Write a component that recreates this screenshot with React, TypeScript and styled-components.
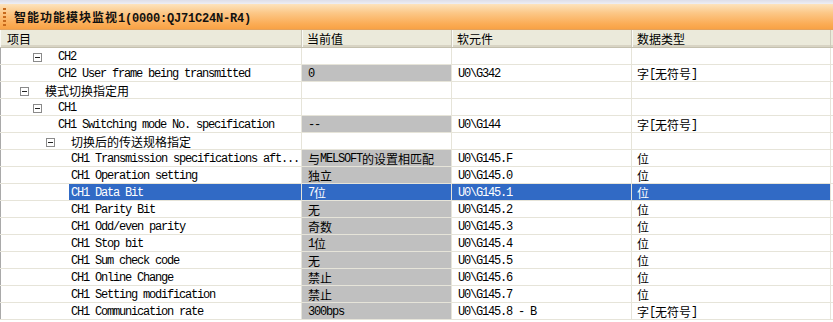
import React, { FC } from 'react';
import styled, { createGlobalStyle, css } from 'styled-components';

const GlobalStyle = createGlobalStyle`
  html, body {
    margin: 0;
    padding: 0;
    background: #fff;
  }
  body {
    font-family: "Noto Sans CJK SC", sans-serif;
    font-size: 12px;
    color: #000;
  }
`;

const COLUMNS = '302px 150px 180px 199px';
const LINE = '#e6e4d9';

type Item = {
  label: string;
  level: number;
  group?: boolean;
  value?: string;
  device?: string;
  type?: string;
  selected?: boolean;
};

const items: Item[] = [
  { label: 'CH2', level: 2, group: true },
  { label: 'CH2 User frame being transmitted', level: 2, value: '0', device: 'U0\\G342', type: '字[无符号]' },
  { label: '模式切换指定用', level: 1, group: true },
  { label: 'CH1', level: 2, group: true },
  { label: 'CH1 Switching mode No. specification', level: 2, value: '--', device: 'U0\\G144', type: '字[无符号]' },
  { label: '切换后的传送规格指定', level: 3, group: true },
  { label: 'CH1 Transmission specifications aft...', level: 3, value: '与MELSOFT的设置相匹配', device: 'U0\\G145.F', type: '位' },
  { label: 'CH1 Operation setting', level: 3, value: '独立', device: 'U0\\G145.0', type: '位' },
  { label: 'CH1 Data Bit', level: 3, value: '7位', device: 'U0\\G145.1', type: '位', selected: true },
  { label: 'CH1 Parity Bit', level: 3, value: '无', device: 'U0\\G145.2', type: '位' },
  { label: 'CH1 Odd/even parity', level: 3, value: '奇数', device: 'U0\\G145.3', type: '位' },
  { label: 'CH1 Stop bit', level: 3, value: '1位', device: 'U0\\G145.4', type: '位' },
  { label: 'CH1 Sum check code', level: 3, value: '无', device: 'U0\\G145.5', type: '位' },
  { label: 'CH1 Online Change', level: 3, value: '禁止', device: 'U0\\G145.6', type: '位' },
  { label: 'CH1 Setting modification', level: 3, value: '禁止', device: 'U0\\G145.7', type: '位' },
  { label: 'CH1 Communication rate', level: 3, value: '300bps', device: 'U0\\G145.8 - B', type: '字[无符号]' },
];

const Window = styled.div`
  width: 833px;
  height: 322px;
  overflow: hidden;
  background: #fff;
`;

const TopStrip = styled.div`
  height: 4px;
  background: linear-gradient(#dedee8, #eeeef4);
`;

const TitleBar = styled.div`
  display: flex;
  align-items: center;
  height: 26px;
  padding-left: 3px;
  background: linear-gradient(#fde3bd 0%, #fcc888 35%, #fbac55 80%, #f8a245 100%);
  border-bottom: 1px solid #e4a25c;
  box-sizing: border-box;
`;

const Grip = styled.span`
  width: 3px;
  height: 18px;
  margin-right: 8px;
  background: repeating-linear-gradient(#c7691c 0 2px, transparent 2px 4px);
`;

const Latin = styled.span`
  font-family: "Liberation Mono", monospace;
  font-size: 12px;
  letter-spacing: -1.2px;
  white-space: pre;
`;

const Title = styled.span`
  font-weight: bold;
  font-size: 12px;
  letter-spacing: 1px;
  color: #111;
  white-space: pre;

  & ${Latin} {
    letter-spacing: -0.2px;
  }
`;

const Mixed: FC<{ text: string }> = ({ text }) => (
  <>
    {text
      .split(/([\x00-\x7f]+)/)
      .filter(Boolean)
      .map((part, i) =>
        /^[\x00-\x7f]+$/.test(part) ? <Latin key={i}>{part}</Latin> : <span key={i}>{part}</span>,
      )}
  </>
);

const Table = styled.div`
  box-shadow: inset 1px 0 #a9a9a9;
`;

const HeaderRow = styled.div`
  display: grid;
  grid-template-columns: ${COLUMNS};
  height: 18px;
  background: #ebeadb;
  box-sizing: border-box;
  border-bottom: 1px solid #c4c0ae;
  box-shadow: inset 0 -2px #d8d4c4;
`;

const HeaderCell = styled.div<{ $pad: number }>`
  display: flex;
  align-items: center;
  padding-left: ${(p) => p.$pad}px;
  border-right: 1px solid #cdcabb;
  box-shadow: inset 1px 0 #fafaf6;
  line-height: 16px;
  white-space: nowrap;
`;

const Row = styled.div<{ $selected?: boolean }>`
  display: grid;
  grid-template-columns: ${COLUMNS};
  height: 17px;
  box-sizing: border-box;
  border-bottom: 1px solid ${LINE};
  color: ${(p) => (p.$selected ? '#fff' : '#000')};
`;

const Cell = styled.div<{ $pad: number; $fill?: 'gray' | 'blue' }>`
  display: flex;
  align-items: center;
  padding: 2px 0 0 ${(p) => p.$pad}px;
  border-right: 1px solid ${LINE};
  white-space: nowrap;
  overflow: hidden;
  line-height: 14px;
  ${(p) =>
    p.$fill === 'gray' &&
    css`
      background: #c0c0c0;
    `}
  ${(p) =>
    p.$fill === 'blue' &&
    css`
      background: #316ac5;
    `}
`;

const NameCell = styled.div<{ $indent: number }>`
  display: flex;
  align-items: center;
  padding-left: ${(p) => p.$indent}px;
  border-right: 1px solid ${LINE};
  white-space: nowrap;
  overflow: hidden;
  line-height: 14px;
`;

const Expander = styled.span`
  display: flex;
  align-items: center;
  justify-content: center;
  box-sizing: border-box;
  width: 9px;
  height: 9px;
  margin: 2px 14px 0 0;
  border: 1px solid #8a8a8a;
  background: #fff;

  &::after {
    content: '';
    width: 5px;
    height: 1px;
    background: #222;
  }
`;

const Label = styled.span<{ $selected?: boolean }>`
  display: flex;
  align-items: center;
  align-self: stretch;
  flex: 1;
  padding: 2px 0 0 2px;
  ${(p) =>
    p.$selected &&
    css`
      background: #316ac5;
    `}
`;

const TreeRow: FC<{ item: Item }> = ({ item }) => {
  const indent = item.group ? 7 + 13 * item.level : 30 + 13 * item.level;
  const valueFill = item.selected ? 'blue' : item.value !== undefined ? 'gray' : undefined;
  const rowFill = item.selected ? 'blue' : undefined;
  return (
    <Row $selected={item.selected}>
      <NameCell $indent={indent}>
        {item.group && <Expander />}
        <Label $selected={item.selected}>
          <Mixed text={item.label} />
        </Label>
      </NameCell>
      <Cell $pad={6} $fill={valueFill}>
        {item.value && <Mixed text={item.value} />}
      </Cell>
      <Cell $pad={6} $fill={rowFill}>
        {item.device && <Mixed text={item.device} />}
      </Cell>
      <Cell $pad={5} $fill={rowFill}>
        {item.type && <Mixed text={item.type} />}
      </Cell>
    </Row>
  );
};

const App: FC = () => (
  <Window>
    <GlobalStyle />
    <TopStrip />
    <TitleBar>
      <Grip />
      <Title>
        <Mixed text="智能功能模块监视1(0000:QJ71C24N-R4)" />
      </Title>
    </TitleBar>
    <Table>
      <HeaderRow>
        <HeaderCell $pad={7}>项目</HeaderCell>
        <HeaderCell $pad={5}>当前值</HeaderCell>
        <HeaderCell $pad={5}>软元件</HeaderCell>
        <HeaderCell $pad={5}>数据类型</HeaderCell>
      </HeaderRow>
      {items.map((item, i) => (
        <TreeRow key={i} item={item} />
      ))}
    </Table>
  </Window>
);

export default App;
